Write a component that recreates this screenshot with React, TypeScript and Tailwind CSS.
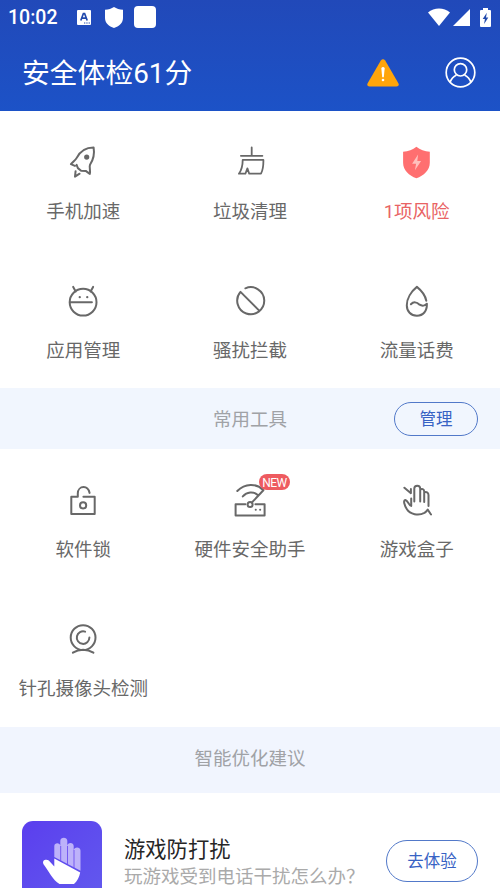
import type { ReactNode } from "react";

interface Tool {
  label: string;
  icon: ReactNode;
  danger?: boolean;
  isNew?: boolean;
}

function Icon({ children }: { children: ReactNode }) {
  return (
    <svg
      width="40"
      height="40"
      viewBox="-0.4 -0.4 40 40"
      fill="none"
      stroke="#686868"
      strokeWidth="2"
      strokeLinejoin="round"
      strokeLinecap="round"
    >
      {children}
    </svg>
  );
}

const mainTools: Tool[] = [
  {
    label: "手机加速",
    icon: (
      <Icon>
        <path d="M11.500 23.500 7.500 21.800C10 19 12 18 13.300 15.500 16.500 9 22 5 30.200 5c1.300 7.500-.4 12.500-3.600 17.400-1 2.200.7 5.500-.2 9.100L22.300 28.500l-4.600-.2-3.200-2.600-1.300-3.200" />
        <path d="M12.200 28.800 11.600 34.300 16.200 31.300" />
        <circle cx="23.300" cy="14.700" r="1.600" fill="#686868" />
      </Icon>
    ),
  },
  {
    label: "垃圾清理",
    icon: (
      <Icon>
        <path
          d="M21.300 5v8.300M10.500 13.400H32M12.300 17.500H33c.1 6-.4 10-2.400 13.800H18.800L17 26l-2 5.300H8.500c2.700-3.700 3.800-8 3.800-13.800Z"
          strokeWidth="1.800"
        />
      </Icon>
    ),
  },
  {
    label: "1项风险",
    danger: true,
    icon: (
      <svg width="40" height="40" viewBox="0 0 40 40">
        <path
          d="M19.400 4.800C23.100 8 27.600 9.500 32.800 9.700v11c0 7.300-6 13-13.400 15.500C12.100 33.700 6.100 28 6.100 20.700v-11c5.200-.2 9.700-1.700 13.300-4.900Z"
          fill="#ff6f70"
        />
        <path d="M21.100 12.500 15.100 21.800h4l-1.200 6.400 6.200-9.300h-3.800Z" fill="#ffc0bd" />
      </svg>
    ),
  },
  {
    label: "应用管理",
    icon: (
      <Icon>
        <circle cx="19.700" cy="20.800" r="13.400" />
        <path d="m9.800 5.500 2.500 4.600M29.700 5.500l-2.500 4.600M6.500 20.800h22" />
        <path d="M16.300 15.800h.1M23.800 15.800h.1" strokeWidth="2.200" />
      </Icon>
    ),
  },
  {
    label: "骚扰拦截",
    icon: (
      <Icon>
        <path d="M15 6.900A13.500 13.500 0 1 1 10.100 10.500L28.300 28.700" />
      </Icon>
    ),
  },
  {
    label: "流量话费",
    icon: (
      <Icon>
        <path d="M28.900 19.300C27.900 14.300 24.100 9.200 19.500 5.500 13.900 10 9.400 17.200 9.400 23.800c0 6.200 4 10.500 10.100 10.500 6.300 0 10.200-4.500 10-12-1.600 2.200-4.900 2.600-7.300 1-2.800-2.700-6-3.300-8.700-.5" />
      </Icon>
    ),
  },
];

const commonTools: Tool[] = [
  {
    label: "软件锁",
    icon: (
      <Icon>
        <path d="M20 16.300H31.300V33.700H7.900V16.300H14.400V13C14.400 9.200 17 6.700 20.200 6.700c3 0 5 1.700 6 5.800" />
        <circle cx="19.700" cy="25" r="3.100" />
      </Icon>
    ),
  },
  {
    label: "硬件安全助手",
    isNew: true,
    icon: (
      <Icon>
        <path d="M15 23.900H5.200V35.200H34.200V23.900H25M6.900 10.600C14.500 2.700 26 2.500 33 9.800L21.600 22M12.400 16c4.200-4.700 10.500-5.200 15-1.500" />
        <circle cx="19.700" cy="24" r="2.500" />
        <path d="M25.300 29.400h.1M29.700 29.400h.1" />
      </Icon>
    ),
  },
  {
    label: "游戏盒子",
    icon: (
      <Icon>
        <path d="m7 7.300 6.500 5.500V8.600M16.900 21V8.200c0-3.800 5.900-3.800 5.900 0V21M22.800 9.300c1.600-1.500 4-.6 4 1.800V21.500M26.800 12.200c2-1.300 4.300 0 4.300 2.500V25.500M13.800 18V25.500C11 24.500 10.500 20 8 19.500 5.500 20 7 25 9.500 28.800c3.200 5 11.500 7 17.500 3.700 1.500-.9 2.300-2 3.300-3.300l3.300 4.900" />
      </Icon>
    ),
  },
  {
    label: "针孔摄像头检测",
    icon: (
      <Icon>
        <circle cx="19.700" cy="18.200" r="12.400" />
        <path d="M21.700 12.200A6.300 6.300 0 1 0 26 18.200M9.500 33.300c6.200-4 14.200-4 20.500 0" />
      </Icon>
    ),
  },
];

function ToolGrid({ tools }: { tools: Tool[] }) {
  return (
    <div className="grid grid-cols-3 auto-rows-[139px]">
      {tools.map((tool) => (
        <div key={tool.label} className="flex flex-col items-center pt-[31px]">
          <div className="relative">
            {tool.icon}
            {tool.isNew && (
              <span className="absolute -top-[6px] left-[29px] flex h-4 w-[31px] items-center justify-center rounded-full bg-[#ee5b60] pt-px text-[12px] tracking-[-0.6px] text-white">
                NEW
              </span>
            )}
          </div>
          <span
            className={`mt-[15.500px] text-[18.500px] leading-7 whitespace-nowrap ${
              tool.danger ? "text-[#e96364]" : "text-[#686868]"
            }`}
          >
            {tool.label}
          </span>
        </div>
      ))}
    </div>
  );
}

function StatusBar() {
  return (
    <div className="flex h-[34px] items-center pl-2 text-white">
      <span className="w-[50px] pt-0.5 text-[19.500px] font-medium">10:02</span>
      <svg className="ml-[19px]" width="14" height="15" viewBox="0 0 14 15">
        <rect width="14" height="15" rx="1" fill="white" />
        <path d="m3.800 10.500 2.600-7h1.200l2.600 7M4.900 8.200h4.200" fill="none" stroke="#2149ac" strokeWidth="1.700" />
        <path d="M7 13h1.300M9.300 13h1.300M11.600 13h1.300" stroke="#2149ac" />
      </svg>
      <svg className="ml-[14px]" width="18" height="21" viewBox="0 0 18 21">
        <path d="M9 0c2.500 1.700 5.500 2.500 9 2.700V11c0 5-4 8.300-9 10-5-1.700-9-5-9-10V2.700C3.500 2.500 6.500 1.700 9 0Z" fill="white" />
      </svg>
      <div className="ml-[11px] h-[22px] w-[22px] rounded-[4px] bg-white" />
      <svg className="ml-auto" width="22" height="18" viewBox="0 0 22 18">
        <path d="M0 4.500C6-.9 16-.9 22 4.500L11 18Z" fill="white" />
      </svg>
      <svg className="ml-[3px]" width="17" height="17" viewBox="0 0 17 17">
        <path d="M17 0v17H0Z" fill="white" />
      </svg>
      <svg className="mr-[9px] ml-[10px]" width="11" height="19" viewBox="0 0 11 19">
        <path d="M3 0h5v2h2q1 0 1 1v15q0 1-1 1H1q-1 0-1-1V3q0-1 1-1h2Z" fill="white" />
        <path d="M6.800 4.800 2.700 11h2.200l-.8 5L8.300 9.500H6Z" fill="#2149ac" />
      </svg>
    </div>
  );
}

export default function App() {
  return (
    <div className="h-[888px] w-[500px] overflow-hidden bg-white font-[Roboto,'Noto_Sans_CJK_SC',sans-serif]">
      <header className="h-[111px] bg-linear-to-b from-[#2149b9] to-[#1c52c7]">
        <StatusBar />
        <div className="flex h-[77px] items-center pr-6 pl-[22px]">
          <h1 className="pt-[3px] text-[27.800px] leading-10 text-white">安全体检61分</h1>
          <svg className="ml-auto" width="32" height="28" viewBox="0 0 32 28">
            <path d="M13.800 1.400q2.200-2.300 4.400 0L31.500 24.500q1 3-2 3h-27q-3 0-2-3Z" fill="#ffa50a" />
            <path d="M14.300 9q1.700-1.800 3.400 0l-.9 9.300h-1.600Z" fill="white" />
            <circle cx="16" cy="21" r="1.300" fill="white" />
          </svg>
          <svg
            className="ml-[46px]"
            width="31"
            height="31"
            viewBox="0 0 31 31"
            fill="none"
            stroke="white"
            strokeWidth="1.700"
          >
            <circle cx="15.500" cy="15.500" r="14.300" />
            <circle cx="15.500" cy="12.800" r="6.200" />
            <path d="M5 25.500c1.200-3.500 3.500-6 6.500-7.500M26 25.500c-1.200-3.500-3.500-6-6.500-7.500" />
          </svg>
        </div>
      </header>

      <ToolGrid tools={mainTools} />

      <div className="-mt-px grid h-[61px] grid-cols-3 items-center bg-[#f1f6fe]">
        <span className="col-start-2 pt-1 text-center text-[18.500px] text-[#a0a2a6]">常用工具</span>
        <button className="mr-[22px] h-[34px] w-[84px] justify-self-end rounded-full border border-[#5279c9] pt-[3px] text-[16.500px] text-[#3762c4]">
          管理
        </button>
      </div>

      <ToolGrid tools={commonTools} />

      <div className="flex h-[66px] items-center justify-center bg-[#f1f5fe] text-[18.500px] text-[#a0a2a6]">
        智能优化建议
      </div>

      {/* Suggestion card */}
      <div className="flex items-start px-[22px] pt-7">
        <div className="h-20 w-20 shrink-0 rounded-[11px] bg-linear-to-br from-[#5b3eee] to-[#6259ee]">
          <svg width="80" height="80" viewBox="0 0 80 80">
            <path
              d="M32.300 36V25c0-3.700 6-3.700 6 0v-5.300c0-4 7-4 7 0V25c0-4 6.400-4 6.400 0v4.500c0-4 6.800-4 6.800 0V49.700Z"
              fill="#bdb2fa"
            />
            <path d="M38.700 25v15M45.500 25v18M52 29v18" stroke="#6d50ef" strokeWidth=".9" />
            <path
              d="M32.300 37.500 58.200 51.500c-1 5-3 8.500-6.200 11.500H37.500C30.500 59 27 50 21.500 43.200c-2-4.400 3-5.200 5.300-3.700l5.500 6Z"
              fill="white"
            />
          </svg>
        </div>
        <div className="ml-[22px] flex flex-col whitespace-nowrap">
          <span className="mt-[14px] text-[21.300px] leading-[29px] text-[#262626]">游戏防打扰</span>
          <span className="text-[18.500px] leading-[26px] text-[#aaa]">玩游戏受到电话干扰怎么办？</span>
        </div>
        <button className="mt-[19px] ml-auto h-[42px] w-[92px] shrink-0 rounded-full border border-[#5279c9] pt-[3px] text-[16.500px] text-[#3762c4]">
          去体验
        </button>
      </div>
    </div>
  );
}
